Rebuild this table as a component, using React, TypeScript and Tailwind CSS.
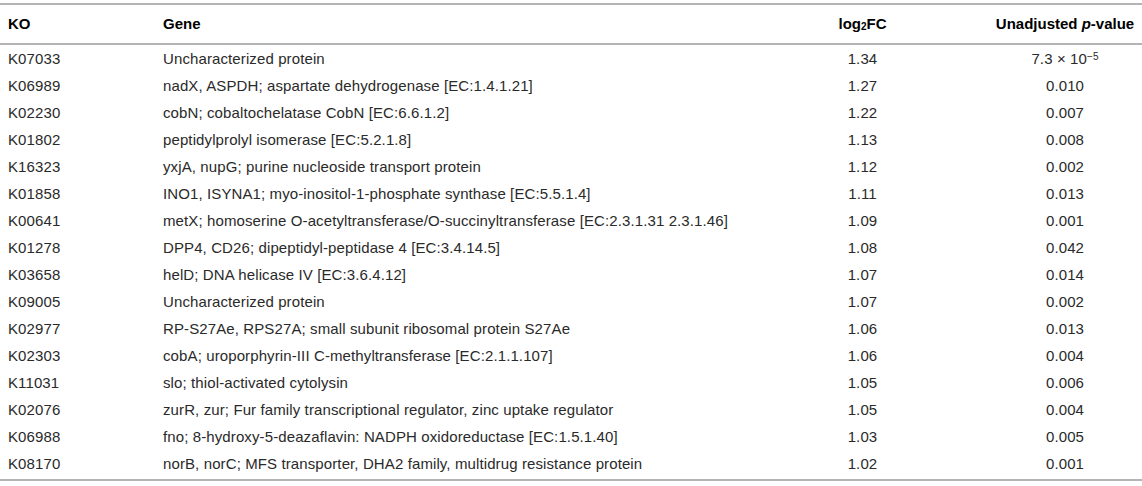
import React from "react";

const rows: [string, string, string, React.ReactNode][] = [
  ["K07033", "Uncharacterized protein", "1.34", <span>7.3 × 10<sup className="text-[10px] relative -top-[4px] align-baseline">−5</sup></span>],
  ["K06989", "nadX, ASPDH; aspartate dehydrogenase [EC:1.4.1.21]", "1.27", "0.010"],
  ["K02230", "cobN; cobaltochelatase CobN [EC:6.6.1.2]", "1.22", "0.007"],
  ["K01802", "peptidylprolyl isomerase [EC:5.2.1.8]", "1.13", "0.008"],
  ["K16323", "yxjA, nupG; purine nucleoside transport protein", "1.12", "0.002"],
  ["K01858", "INO1, ISYNA1; myo-inositol-1-phosphate synthase [EC:5.5.1.4]", "1.11", "0.013"],
  ["K00641", "metX; homoserine O-acetyltransferase/O-succinyltransferase [EC:2.3.1.31 2.3.1.46]", "1.09", "0.001"],
  ["K01278", "DPP4, CD26; dipeptidyl-peptidase 4 [EC:3.4.14.5]", "1.08", "0.042"],
  ["K03658", "helD; DNA helicase IV [EC:3.6.4.12]", "1.07", "0.014"],
  ["K09005", "Uncharacterized protein", "1.07", "0.002"],
  ["K02977", "RP-S27Ae, RPS27A; small subunit ribosomal protein S27Ae", "1.06", "0.013"],
  ["K02303", "cobA; uroporphyrin-III C-methyltransferase [EC:2.1.1.107]", "1.06", "0.004"],
  ["K11031", "slo; thiol-activated cytolysin", "1.05", "0.006"],
  ["K02076", "zurR, zur; Fur family transcriptional regulator, zinc uptake regulator", "1.05", "0.004"],
  ["K06988", "fno; 8-hydroxy-5-deazaflavin: NADPH oxidoreductase [EC:1.5.1.40]", "1.03", "0.005"],
  ["K08170", "norB, norC; MFS transporter, DHA2 family, multidrug resistance protein", "1.02", "0.001"],
];

export default function App() {
  return (
    <div className="w-[1142px] h-[486px] bg-white pt-[3px] text-[15px] text-[#2a2a2a]" style={{ fontFamily: '"Liberation Sans", Arial, sans-serif' }}>
      <div className="h-[2px] bg-[#b4b4b4]" />
      <div className="grid grid-cols-[163px_627px_145px_207px] items-center h-[38px] font-bold text-black">
        <div className="pl-[8px]">KO</div>
        <div>Gene</div>
        <div className="text-center">
          log<sub className="text-[10px] relative top-[1px] align-baseline">2</sub>FC
        </div>
        <div className="pl-[53px] text-center whitespace-nowrap">
          Unadjusted <span className="italic">p</span>-value
        </div>
      </div>
      <div className="h-[2px] bg-[#b4b4b4]" />
      <div className="flex flex-col pt-[1px] pb-[1px] tracking-[0.11px]">
        {rows.map(([ko, gene, fc, p]) => (
          <div key={ko} className="grid grid-cols-[163px_627px_145px_207px] items-center h-[27px]">
            <div className="pl-[8px]">{ko}</div>
            <div className="whitespace-nowrap">{gene}</div>
            <div className="text-center">{fc}</div>
            <div className="pl-[53px] text-center">{p}</div>
          </div>
        ))}
      </div>
      <div className="h-[2px] bg-[#b4b4b4]" />
    </div>
  );
}
